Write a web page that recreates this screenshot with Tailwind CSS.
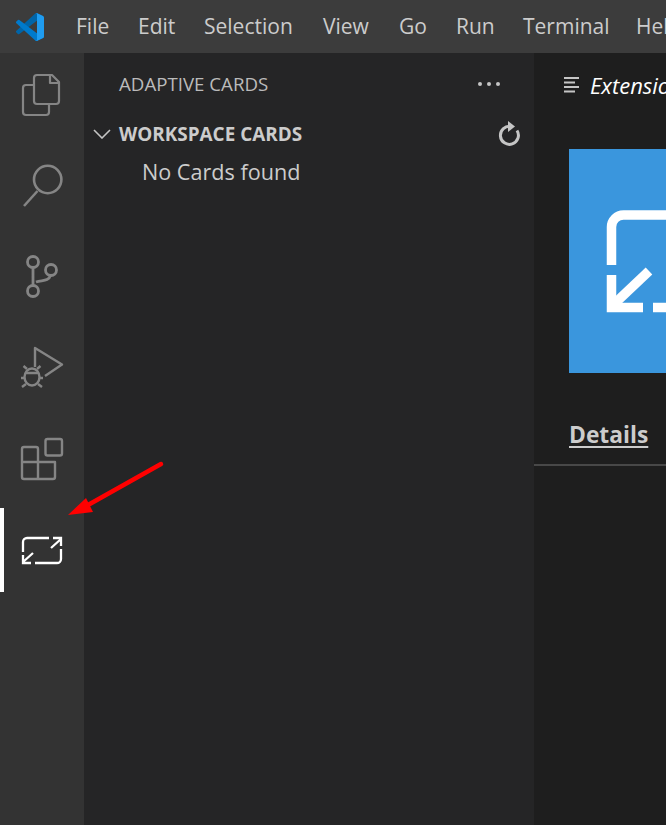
<!DOCTYPE html>
<html><head><meta charset="utf-8"><script src="https://cdn.jsdelivr.net/npm/@tailwindcss/browser@4"></script></head>
<body class="m-0 overflow-hidden bg-[#1e1e1e]">
<div class="relative w-[666px] h-[825px] overflow-hidden flex flex-col font-['Open_Sans','Noto_Sans',sans-serif]">
  <header class="h-[53px] shrink-0 bg-[#3c3c3c] flex items-center text-[#cccccc] text-[21px] whitespace-nowrap overflow-hidden">
    <svg class="ml-[16px] w-[28px] h-[28px] shrink-0" viewBox="0 0 100 100">
      <path fill="#0065A9" d="M96.46 10.8 75.86.9a6.23 6.23 0 0 0-7.1 1.2L1.34 63.6a4.17 4.17 0 0 0 0 6.16l5.5 5a4.17 4.17 0 0 0 5.32.24L93.4 13.4a4.14 4.14 0 0 1 6.6 3.3v-.24a6.25 6.25 0 0 0-3.54-5.63z"/>
      <path fill="#007ACC" d="M96.46 89.2 75.86 99.1a6.23 6.23 0 0 1-7.1-1.2L1.34 36.4a4.17 4.17 0 0 1 0-6.16l5.5-5a4.17 4.17 0 0 1 5.32-.24L93.4 86.6a4.14 4.14 0 0 0 6.6-3.3v.24a6.25 6.25 0 0 1-3.54 5.63z"/>
      <path fill="#1F9CF0" d="M75.86 99.13a6.23 6.23 0 0 1-7.1-1.2c2.3 2.3 6.24.67 6.24-2.58V4.65c0-3.25-3.94-4.88-6.24-2.58a6.23 6.23 0 0 1 7.1-1.2l20.6 9.9A6.25 6.25 0 0 1 100 16.4v67.2a6.25 6.25 0 0 1-3.54 5.63z"/>
    </svg>
    <nav class="ml-[32px] flex pt-[1px]">
      <span class="w-[62px]">File</span><span class="w-[66px]">Edit</span><span class="w-[119px]">Selection</span><span class="w-[76px]">View</span><span class="w-[57px]">Go</span><span class="w-[67px]">Run</span><span class="w-[113px]">Terminal</span><span>Help</span>
    </nav>
  </header>
  <div class="flex flex-1 min-h-0">
    <aside class="w-[84px] shrink-0 bg-[#333333] flex flex-col">
      <div class="h-[91px]"><svg class="block" width="84" height="91" viewBox="0 53 84 91" fill="none" stroke="#858585" stroke-width="2.200" stroke-linejoin="round">
        <path d="M34 85H26a3 3 0 0 0-3 3v24a3 3 0 0 0 3 3h20a3 3 0 0 0 3-3v-8"/>
        <path d="M37 75h15l7 7v19a3 3 0 0 1-3 3H37a3 3 0 0 1-3-3V78a3 3 0 0 1 3-3z"/>
        <path d="M50 75v8h9"/>
      </svg></div>
      <div class="h-[91px]"><svg class="block" width="84" height="91" viewBox="0 144 84 91" fill="none" stroke="#858585" stroke-width="2.600">
        <circle cx="47.7" cy="179.5" r="13.7"/><path d="M37.5 191 24 206"/>
      </svg></div>
      <div class="h-[91px]"><svg class="block" width="84" height="91" viewBox="0 235 84 91" fill="none" stroke="#858585" stroke-width="2.800">
        <circle cx="33" cy="262" r="5.500"/><circle cx="51" cy="270" r="5.500"/><circle cx="33" cy="291" r="5.500"/>
        <path d="M33 267.500v18M36 282c4-1.500 8-1 11-2.500 2-1 3-2 3.500-4"/>
      </svg></div>
      <div class="h-[91px]"><svg class="block" width="84" height="91" viewBox="0 326 84 91" fill="none" stroke="#858585" stroke-width="2.400" stroke-linejoin="round">
        <path d="M35 367v-19l27 16.500-17 11.500"/>
        <ellipse cx="32" cy="377" rx="7.500" ry="8.500"/>
        <path d="M25 373h14M27 369l-3.500-3M37 369l3.500-3M24.500 378H21M39.500 378H43M26 384l-4 3M38 384l4 3"/>
      </svg></div>
      <div class="h-[91px]"><svg class="block" width="84" height="91" viewBox="0 417 84 91" fill="none" stroke="#858585" stroke-width="2.400" stroke-linejoin="round">
        <rect x="45.500" y="439" width="16.500" height="16.500" rx="2"/>
        <path d="M38 462V449a2 2 0 0 0-2-2H24a2 2 0 0 0-2 2v28a2 2 0 0 0 2 2h29a2 2 0 0 0 2-2V462H22M38 462v17"/>
      </svg></div>
      <div class="h-[84px] border-l-4 border-white"><svg class="block -ml-1" width="84" height="84" viewBox="0 508 84 84" fill="none" stroke="#ffffff" stroke-width="2.300">
        <path d="M49 538H27a4 4 0 0 0-4 4v10M35 563h22a4 4 0 0 0 4-4v-10"/>
        <path d="M51 548l10-9M53 538h8v8M33 553l-10 9M23 555v8h8"/>
      </svg></div>
    </aside>
    <section class="w-[450px] shrink-0 bg-[#252526] text-[#cccccc]">
      <div class="h-[64px] pl-[35px] pr-[34px] flex items-center justify-between">
        <span class="text-[18.700px] text-[#bbbbbb] pb-[1px]">ADAPTIVE CARDS</span>
        <span class="flex gap-[5px] mb-[2px]"><i class="w-[4px] h-[4px] rounded-full bg-[#c5c5c5]"></i><i class="w-[4px] h-[4px] rounded-full bg-[#c5c5c5]"></i><i class="w-[4px] h-[4px] rounded-full bg-[#c5c5c5]"></i></span>
      </div>
      <div class="h-[34px] flex items-center relative">
        <svg class="ml-[9px] shrink-0" width="18" height="10" viewBox="0 0 18 10" fill="none" stroke="#c5c5c5" stroke-width="1.600"><path d="M1 1l8 8 8-8"/></svg>
        <span class="ml-[8px] font-bold text-[18.900px] text-[#cccccc]">WORKSPACE CARDS</span>
        <svg class="ml-auto mr-[14px]" width="24" height="26" viewBox="0 0 24 26" fill="none" stroke="#c5c5c5" stroke-width="3"><path d="M15 5.500a9 9 0 1 0 6 4"/><path d="M12 0v11l7-5.500z" fill="#c5c5c5" stroke="none"/></svg>
      </div>
      <div class="h-[42px] pl-[58px] flex items-center text-[21.600px]">No Cards found</div>
    </section>
    <main class="flex-1 min-w-0 bg-[#1e1e1e] overflow-hidden whitespace-nowrap">
      <div class="h-[64px] flex items-center pl-[30px]">
        <svg class="shrink-0" width="16" height="18" viewBox="0 0 16 18" fill="#c5c5c5"><path d="M0 1h15v2H0zM0 5.500h11v2H0zM0 10h15v2H0zM0 14.500h11v2H0z"/></svg>
        <span class="ml-[10px] italic text-[22px] text-white">Extension</span>
      </div>
      <div class="h-[224px] mt-[32px] ml-[35px] bg-[#3a96dd] overflow-hidden">
        <svg class="block" width="97" height="224" viewBox="569 149 97 224" fill="none" stroke="#ffffff" stroke-width="9.500">
          <path d="M611.500 265v-38a12 12 0 0 1 12-12H666"/>
          <path d="M611.500 275v32.500H643"/>
          <path d="M612 306l37-35"/>
          <path d="M653 307.500h13"/>
        </svg>
      </div>
      <div class="h-[93px] border-b-2 border-[#484848] pl-[35px] pt-[46px]">
        <span class="font-bold text-[22.800px] leading-[32px] text-[#cccccc] underline underline-offset-[3px]">Details</span>
      </div>
    </main>
  </div>
  <svg class="absolute left-[60px] top-[455px]" width="110" height="70" viewBox="60 455 110 70">
    <path d="M161 464 88 505" stroke="#ff0000" stroke-width="4.500" stroke-linecap="round" fill="none"/>
    <path d="M68 515 86 498 93 512z" fill="#ff0000"/>
  </svg>
</div>
</body></html>
